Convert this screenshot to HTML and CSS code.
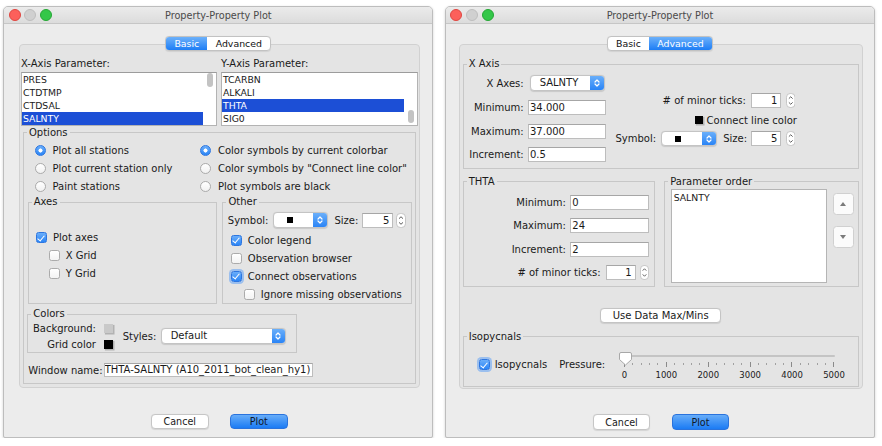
FILE: index.html
```html
<!DOCTYPE html>
<html>
<head>
<meta charset="utf-8">
<title>Property-Property Plot</title>
<link rel="stylesheet" href="styles.css">
</head>
<body>
<div class="desk">

  <section class="win win-basic">
    <div class="titlebar">
      <span class="lights"><i class="light red"></i><i class="light gray"></i><i class="light green"></i></span>
      <span class="title">Property-Property Plot</span>
      <span></span>
    </div>
    <div class="tabs"><span class="tab tb on">Basic</span><span class="tab ta">Advanced</span></div>
    <div class="panel panel-basic">
      <div class="params">
        <div class="pcol">
          <div class="plabel">X-Axis Parameter:</div>
          <div class="list">
            <ul class="rows"><li>PRES</li><li>CTDTMP</li><li>CTDSAL</li><li class="sel">SALNTY</li></ul>
            <div class="sbar"><i class="thumb"></i></div>
          </div>
        </div>
        <div class="pcol">
          <div class="plabel">Y-Axis Parameter:</div>
          <div class="list">
            <ul class="rows"><li>TCARBN</li><li>ALKALI</li><li class="sel">THTA</li><li>SIG0</li></ul>
            <div class="sbar end"><i class="thumb"></i></div>
          </div>
        </div>
      </div>

      <fieldset class="grp options">
        <legend>Options</legend>
        <div class="radios">
          <div class="opt"><i class="rd on"></i>Plot all stations</div>
          <div class="opt"><i class="rd on"></i>Color symbols by current colorbar</div>
          <div class="opt"><i class="rd"></i>Plot current station only</div>
          <div class="opt"><i class="rd"></i>Color symbols by "Connect line color"</div>
          <div class="opt"><i class="rd"></i>Paint stations</div>
          <div class="opt"><i class="rd"></i>Plot symbols are black</div>
        </div>

        <div class="subs">
          <fieldset class="grp">
            <legend>Axes</legend>
            <div class="axes-body">
              <div class="chk"><i class="cb on"></i>Plot axes</div>
              <div class="chk ind"><i class="cb"></i>X Grid</div>
              <div class="chk ind"><i class="cb"></i>Y Grid</div>
            </div>
          </fieldset>
          <fieldset class="grp">
            <legend>Other</legend>
            <div class="other-body">
              <div class="symrow">
                <span>Symbol:</span>
                <span class="combo symcombo"><span class="cval"><i class="sq"></i></span><span class="cbtn"><svg viewBox="0 0 8 12" width="8" height="12"><path d="M2 5 4 3 6 5M2 7 4 9 6 7" fill="none" stroke="#fff" stroke-width="1.2" stroke-linecap="round" stroke-linejoin="round"/></svg></span></span>
                <span class="sizelbl">Size:</span>
                <span class="field num sizefield">5</span>
                <svg class="spin" viewBox="0 0 10 16" width="10" height="15" preserveAspectRatio="none"><rect x=".5" y=".5" width="9" height="15" rx="4" fill="#fff" stroke="#c3c3c3"/><path d="M3 6 5 4 7 6M3 10 5 12 7 10" fill="none" stroke="#555" stroke-width="1"/></svg>
              </div>
              <div class="chk o"><i class="cb on"></i>Color legend</div>
              <div class="chk o"><i class="cb"></i>Observation browser</div>
              <div class="chk o"><i class="cb on focus"></i>Connect observations</div>
              <div class="chk o ind"><i class="cb"></i>Ignore missing observations</div>
            </div>
          </fieldset>
        </div>

        <fieldset class="grp colors">
          <legend>Colors</legend>
          <div class="colors-body">
            <div class="clab">
              <span>Background:</span><i class="sw grey"></i>
              <span>Grid color</span><i class="sw black"></i>
            </div>
            <span class="styleslbl">Styles:</span>
            <span class="combo stylecombo"><span class="cval">Default</span><span class="cbtn"><svg viewBox="0 0 8 12" width="8" height="12"><path d="M2 5 4 3 6 5M2 7 4 9 6 7" fill="none" stroke="#fff" stroke-width="1.2" stroke-linecap="round" stroke-linejoin="round"/></svg></span></span>
          </div>
        </fieldset>

        <div class="wname">
          <span>Window name:</span>
          <span class="field wfield">THTA-SALNTY (A10_2011_bot_clean_hy1)</span>
        </div>
      </fieldset>
    </div>
    <div class="actions"><span class="btn cancel">Cancel</span><span class="btn plot">Plot</span></div>
  </section>

  <section class="win win-adv">
    <div class="titlebar">
      <span class="lights"><i class="light red"></i><i class="light gray"></i><i class="light green"></i></span>
      <span class="title">Property-Property Plot</span>
      <span></span>
    </div>
    <div class="tabs"><span class="tab tb">Basic</span><span class="tab ta on">Advanced</span></div>
    <div class="panel panel-adv">
      <fieldset class="grp xaxis">
        <legend>X Axis</legend>
        <div class="xbody">
          <div class="xgrid">
            <span class="rl">X Axes:</span>
            <span class="combo xcombo"><span class="cval">SALNTY</span><span class="cbtn"><svg viewBox="0 0 8 12" width="8" height="12"><path d="M2 5 4 3 6 5M2 7 4 9 6 7" fill="none" stroke="#fff" stroke-width="1.2" stroke-linecap="round" stroke-linejoin="round"/></svg></span></span>
            <span class="rl">Minimum:</span><span class="field">34.000</span>
            <span class="rl">Maximum:</span><span class="field">37.000</span>
            <span class="rl">Increment:</span><span class="field">0.5</span>
          </div>
          <div class="xright">
            <div class="xr r1">
              <span># of minor ticks:</span>
              <span class="field num tickfield">1</span>
              <svg class="spin" viewBox="0 0 10 16" width="9.5" height="15" preserveAspectRatio="none"><rect x=".5" y=".5" width="9" height="15" rx="4" fill="#fff" stroke="#c3c3c3"/><path d="M3 6 5 4 7 6M3 10 5 12 7 10" fill="none" stroke="#555" stroke-width="1"/></svg>
            </div>
            <div class="xr r2"><i class="sw black small"></i><span>Connect line color</span></div>
            <div class="xr r3">
              <span>Symbol:</span>
              <span class="combo symcombo2"><span class="cval"><i class="sq"></i></span><span class="cbtn"><svg viewBox="0 0 8 12" width="8" height="12"><path d="M2 5 4 3 6 5M2 7 4 9 6 7" fill="none" stroke="#fff" stroke-width="1.2" stroke-linecap="round" stroke-linejoin="round"/></svg></span></span>
              <span class="sizelbl2">Size:</span>
              <span class="field num tickfield">5</span>
              <svg class="spin" viewBox="0 0 10 16" width="9.5" height="15" preserveAspectRatio="none"><rect x=".5" y=".5" width="9" height="15" rx="4" fill="#fff" stroke="#c3c3c3"/><path d="M3 6 5 4 7 6M3 10 5 12 7 10" fill="none" stroke="#555" stroke-width="1"/></svg>
            </div>
          </div>
        </div>
      </fieldset>

      <div class="row2">
        <fieldset class="grp thta">
          <legend>THTA</legend>
          <div class="tbody">
            <span class="rl">Minimum:</span><span class="field">0</span>
            <span class="rl">Maximum:</span><span class="field">24</span>
            <span class="rl">Increment:</span><span class="field">2</span>
            <div class="tlast">
              <span># of minor ticks:</span>
              <span class="field num tfield">1</span>
              <svg class="spin" viewBox="0 0 10 16" width="9" height="15" preserveAspectRatio="none"><rect x=".5" y=".5" width="9" height="15" rx="4" fill="#fff" stroke="#c3c3c3"/><path d="M3 6 5 4 7 6M3 10 5 12 7 10" fill="none" stroke="#555" stroke-width="1"/></svg>
            </div>
          </div>
        </fieldset>
        <fieldset class="grp porder">
          <legend>Parameter order</legend>
          <div class="pbody">
            <div class="plist">SALNTY</div>
            <div class="pbtns">
              <span class="pbtn"><svg viewBox="0 0 6 4" width="6" height="4"><path d="M0 4 3 0 6 4z" fill="#7a7a7a"/></svg></span>
              <span class="pbtn"><svg viewBox="0 0 6 4" width="6" height="4"><path d="M0 0 3 4 6 0z" fill="#7a7a7a"/></svg></span>
            </div>
          </div>
        </fieldset>
      </div>

      <span class="btn usedata">Use Data Max/Mins</span>

      <fieldset class="grp iso">
        <legend>Isopycnals</legend>
        <div class="isobody">
          <i class="cb on focus isocb"></i>
          <span class="isolbl">Isopycnals</span>
          <span class="preslbl">Pressure:</span>
          <div class="slider">
            <div class="track"></div>
            <svg class="knob" viewBox="0 0 13 14" width="13" height="14"><path d="M2 .5h9a1.5 1.5 0 0 1 1.5 1.5v5.5l-6 5.5-6-5.5V2A1.5 1.5 0 0 1 2 .5z" fill="#fff" stroke="#a8a8a8"/></svg>
            <div class="ticks">
              <i class="mj"></i><i></i><i></i><i></i><i></i>
              <i class="mj"></i><i></i><i></i><i></i><i></i>
              <i class="mj"></i><i></i><i></i><i></i><i></i>
              <i class="mj"></i><i></i><i></i><i></i><i></i>
              <i class="mj"></i><i></i><i></i><i></i><i></i>
              <i class="mj"></i>
            </div>
            <div class="tlabels">
              <span><b>0</b></span><span><b>1000</b></span><span><b>2000</b></span><span><b>3000</b></span><span><b>4000</b></span><span><b>5000</b></span>
            </div>
          </div>
        </div>
      </fieldset>
    </div>
    <div class="actions adv"><span class="btn cancel">Cancel</span><span class="btn plot">Plot</span></div>
  </section>

</div>
</body>
</html>
```
FILE: styles.css
```css
* { box-sizing: border-box; }
html, body { margin: 0; background: #fff; }
body {
  font-family: "DejaVu Sans", "Noto Sans", sans-serif;
  font-size: 10px;
  color: #1a1a1a;
}
ul { margin: 0; padding: 0; list-style: none; }
i { display: block; font-style: normal; }

.desk { display: flex; gap: 11.4px; padding: 6px 0 0 3.3px; align-items: flex-start; }

.win {
  height: 431.5px;
  background: #ececec;
  border: 1px solid #bdbdbd;
  border-radius: 5px 5px 2px 2px;
  box-shadow: 0 1px 3px rgba(0,0,0,.18);
  display: flex;
  flex-direction: column;
  overflow: hidden;
  flex: none;
}
.win-basic { width: 430px; }
.win-adv { width: 430.6px; }

.titlebar {
  height: 17px;
  flex: none;
  display: grid;
  grid-template-columns: 1fr auto 1fr;
  align-items: center;
  background: linear-gradient(#ebebeb, #dcdcdc);
  border-bottom: 1px solid #c6c6c6;
}
.lights { display: flex; gap: 3.8px; margin-left: 4.4px; }
.light { width: 12px; height: 12px; border-radius: 50%; }
.light.red { background: #fc605b; border: 1px solid #de4640; }
.light.gray { background: #d0d0d0; border: 1px solid #bdbdbd; }
.light.green { background: #34c749; border: 1px solid #25a634; }
.title { font-size: 9.7px; color: #4a4a4a; }

.tabs {
  align-self: center;
  display: flex;
  margin-top: 11.5px;
  height: 15.5px;
  position: relative;
  z-index: 1;
  border: 1px solid #c2c2c2;
  border-radius: 4px;
  overflow: hidden;
  background: #fff;
  box-shadow: 0 .5px 1px rgba(0,0,0,.08);
  flex: none;
}
.tab { font-size: 9.4px; display: flex; align-items: center; justify-content: center; color: #111; }
.tab.tb { width: 41px; }
.tab.ta { width: 63px; }
.tab.on { background: linear-gradient(#6db1fa, #1d7df5); color: #fff; }

.panel {
  margin-top: -7.5px;
  background: #e4e4e4;
  border: 1px solid #d1d1d1;
  border-radius: 4px;
  flex: none;
}
.panel-basic { margin-left: 14.7px; width: 401px; height: 344px; padding: 13.5px 1px 0; }
.panel-adv {
  margin-top: -6.7px;
  margin-left: 13px; width: 404px; height: 345px; padding: 12.7px 2px 0;
  display: flex; flex-direction: column;
}

/* parameter lists */
.params { display: grid; grid-template-columns: 196px 197px; column-gap: 4px; }
.plabel { line-height: 12px; margin-bottom: 1.5px; }
.list { height: 54px; background: #fff; border: 1px solid #b3b3b3; border-top-color: #9c9c9c; display: flex; }
.rows { flex: 1; font-size: 9.3px; }
.rows li { height: 13px; line-height: 13px; padding-left: 1px; white-space: nowrap; }
.rows li.sel { background: #1c4fd6; color: #fff; }
.sbar { width: 12.5px; display: flex; flex-direction: column; align-items: center; }
.thumb { width: 6px; height: 14px; border-radius: 3px; background: #c3c3c3; margin-top: .5px; }
.sbar.end { justify-content: flex-end; }
.sbar.end .thumb { height: 12.5px; margin: 0 0 2px; }

/* group boxes */
.grp { margin: 0; padding: 0; border: 1px solid #c7c7c7; min-width: 0; }
.grp > legend { font-size: 10px; line-height: 12px; padding: 0 2px; margin-left: 3px; color: #1a1a1a; }

.options { margin: 1px 2px 0; }
.radios { display: grid; grid-template-columns: 165.5px auto; grid-auto-rows: 18px; margin: 3px 0 0 11px; }
.opt { display: flex; align-items: center; gap: 6.5px; white-space: nowrap; }
.rd { width: 11px; height: 11px; border-radius: 50%; border: 1px solid #ababab; background: linear-gradient(#fff, #f1f1f1); flex: none; }
.rd.on { border-color: #2d76e0; background: radial-gradient(circle, #fff 0 1.8px, transparent 2.3px), linear-gradient(#6aaefa, #2b85f6); }

.subs { display: flex; align-items: flex-start; gap: 5.5px; margin: .7px 3.3px 0 3.7px; }
.subs > .grp { flex: 1; }
.axes-body { height: 95px; display: flex; flex-direction: column; justify-content: center; }
.other-body { height: 95px; padding-top: 4px; }

.chk { display: flex; align-items: center; height: 18px; gap: 6px; padding-left: 7.3px; white-space: nowrap; }
.chk.ind { padding-left: 20px; }
.chk.o { padding-left: 7.4px; }
.chk.o.ind { padding-left: 20.4px; }
.cb { width: 11px; height: 11px; flex: none; border: 1px solid #ababab; border-radius: 2.5px; background: linear-gradient(#fff, #f3f3f3); display: flex; justify-content: center; }
.cb.on { background: linear-gradient(#6aaefa, #2b85f6); border-color: #2d76e0; }
.cb.on::after { content: ""; width: 3px; height: 6px; margin-top: .6px; border: solid #fff; border-width: 0 1.3px 1.3px 0; transform: rotate(40deg); }
.cb.focus { box-shadow: 0 0 0 2px rgba(95,160,245,.55); }

.symrow { display: flex; align-items: center; height: 16px; margin-bottom: 3px; padding-left: 4.4px; white-space: nowrap; }
.symrow .combo { margin-left: 4.4px; }
.sizelbl { margin-left: 6.6px; }
.sizefield { margin-left: 3.5px; width: 31.6px; padding-right: 3px; }
.symrow .spin { margin-left: 2.7px; }

.combo { display: flex; height: 16px; border: 1px solid #c4c4c4; border-radius: 4px; background: #fff; overflow: hidden; flex: none; box-shadow: 0 .5px 1px rgba(0,0,0,.12); }
.cval { flex: 1; padding-left: 9px; line-height: 14px; display: flex; align-items: center; }
.cbtn { width: 13.4px; flex: none; background: linear-gradient(#6aaffa, #2a84f6); display: flex; align-items: center; justify-content: center; }
.sq { width: 6px; height: 6px; background: #000; }
.symcombo { width: 55px; }
.symcombo .cval { padding-left: 13px; }

.field { background: #fff; border: 1px solid #bdbdbd; border-top-color: #a6a6a6; height: 15px; line-height: 13px; padding: 0 1px; white-space: nowrap; overflow: hidden; flex: none; }
.field.num { text-align: right; padding-right: 3px; }
.spin { display: block; flex: none; }

.colors { width: 269.4px; margin: 4px 0 0 3.3px; }
.colors-body { display: flex; align-items: center; height: 32px; }
.clab { display: grid; grid-template-columns: 67.7px 10.7px; column-gap: 8.3px; grid-auto-rows: 16px; align-items: center; }
.clab span { text-align: right; white-space: nowrap; }
.sw { width: 9px; height: 9px; box-shadow: 1.2px 1.2px 0 .3px rgba(0,0,0,.22); }
.sw.grey { background: #c9c9c9; }
.sw.black { background: #000; }
.styleslbl { margin-left: 7.7px; }
.stylecombo { width: 125.3px; margin-left: 4.3px; }

.wname { display: flex; align-items: center; gap: 1.5px; height: 13.3px; margin: 10.3px 0 6.7px 4.3px; white-space: nowrap; }
.wfield { width: 209px; height: 13.3px; line-height: 11.3px; padding: 0; text-indent: -.5px; }

.actions { display: flex; justify-content: center; gap: 21.3px; margin-top: 26px; padding-left: 2px; }
.actions.adv { margin-top: 25px; }
.btn { width: 57.7px; height: 15.5px; border-radius: 4px; font-size: 9.6px; display: flex; align-items: center; justify-content: center; flex: none; }
.btn.cancel { background: #fff; border: 1px solid #c6c6c6; box-shadow: 0 .5px 1px rgba(0,0,0,.1); color: #1a1a1a; }
.btn.plot { background: linear-gradient(#67adf9, #1b7bf4); border: 1px solid #2a73dd; color: #101828; }

/* Advanced tab */
.xaxis { margin: 0 1px; }
.xbody { display: flex; height: 98.3px; }
.xgrid { display: grid; grid-template-columns: 60px 78.3px; grid-template-rows: 16px 15px 15px 15px; column-gap: 4.3px; row-gap: 8.8px; margin-top: 5px; align-items: center; align-content: start; }
.rl { text-align: right; white-space: nowrap; }
.xcombo { width: 75.6px; height: 15.5px; margin-left: 1.7px; }
.xcombo .cval { padding-left: 9px; }
.xcombo .cbtn { width: 14px; }
.xright { width: 181px; margin-left: 9.7px; display: flex; flex-direction: column; align-items: flex-end; padding-top: 23.3px; }
.xr { display: flex; align-items: center; white-space: nowrap; }
.r1 { height: 15px; margin-right: 1.7px; }
.r1 .field { margin-left: 5px; }
.r1 .spin, .r3 .spin { margin-left: 4.3px; }
.tickfield { width: 30.7px; }
.r2 { height: 14px; margin-top: 5px; }
.sw.small { width: 8px; height: 8px; margin-right: 3.8px; }
.r3 { height: 15px; margin-top: 4px; margin-right: 1.7px; }
.symcombo2 { width: 55.7px; height: 15px; margin-left: 4.7px; }
.symcombo2 .cval { padding-left: 13px; }
.sizelbl2 { margin-left: 6.7px; margin-right: 3.7px; }

.row2 { display: flex; gap: 9px; margin: 6.4px 1px 0; }
.thta { width: 192.6px; flex: none; }
.tbody { height: 98px; display: grid; grid-template-columns: 102.3px 79px; grid-template-rows: 15px 15px 15px 15px; column-gap: 4.3px; row-gap: 8.4px; padding-top: 7.3px; align-items: center; align-content: start; }
.tlast { grid-column: 1 / -1; display: flex; justify-content: flex-end; align-items: center; white-space: nowrap; }
.tfield { width: 30px; margin-left: 5px; }
.tlast .spin { margin-left: 4.7px; }
.porder { flex: 1; }
.pbody { height: 98px; display: flex; }
.plist { width: 155.7px; background: #fff; border: 1px solid #b5b5b5; margin: 1.3px 0 2.4px 6px; padding: 1.5px 0 0 1.4px; font-size: 9.3px; line-height: 13px; }
.pbtns { display: flex; flex-direction: column; gap: 11px; margin: 5.6px 0 0 5.7px; }
.pbtn { width: 21px; height: 21.7px; background: #fbfbfb; border: 1px solid #d0d0d0; border-radius: 3.5px; display: flex; align-items: center; justify-content: center; }
.usedata { align-self: center; width: 121px; height: 15px; margin-top: 21.6px; background: #fff; border: 1px solid #c4c4c4; font-size: 10px; box-shadow: 0 .5px 1px rgba(0,0,0,.1); }
.iso { margin: 7.4px 1px 0; }
.isobody { display: flex; align-items: center; padding: 7.3px 0 6px; white-space: nowrap; }
.isocb { margin-left: 15.3px; }
.isolbl { margin-left: 4.7px; }
.preslbl { margin-left: 12px; }
.slider { position: relative; width: 232px; height: 30px; margin-left: 8px; }
.track { margin: 4.8px 0 0 10.7px; width: 211.3px; height: 2.6px; background: #c4c4c4; border-radius: 1.3px; }
.knob { position: absolute; left: 5.3px; top: 1.6px; }
.ticks { margin: 4.6px 0 0 10.7px; width: 210.6px; height: 5px; display: flex; justify-content: space-between; align-items: flex-start; }
.ticks i { width: 1px; height: 2.6px; margin-top: .6px; background: #a0a0a0; }
.ticks i.mj { height: 5px; margin-top: 0; background: #8a8a8a; }
.tlabels { margin: 3px 0 0 10.7px; width: 210.6px; display: flex; justify-content: space-between; font-size: 8.5px; line-height: 10px; }
.tlabels span { width: 1px; display: flex; justify-content: center; }
.tlabels b { font-weight: normal; }
```
